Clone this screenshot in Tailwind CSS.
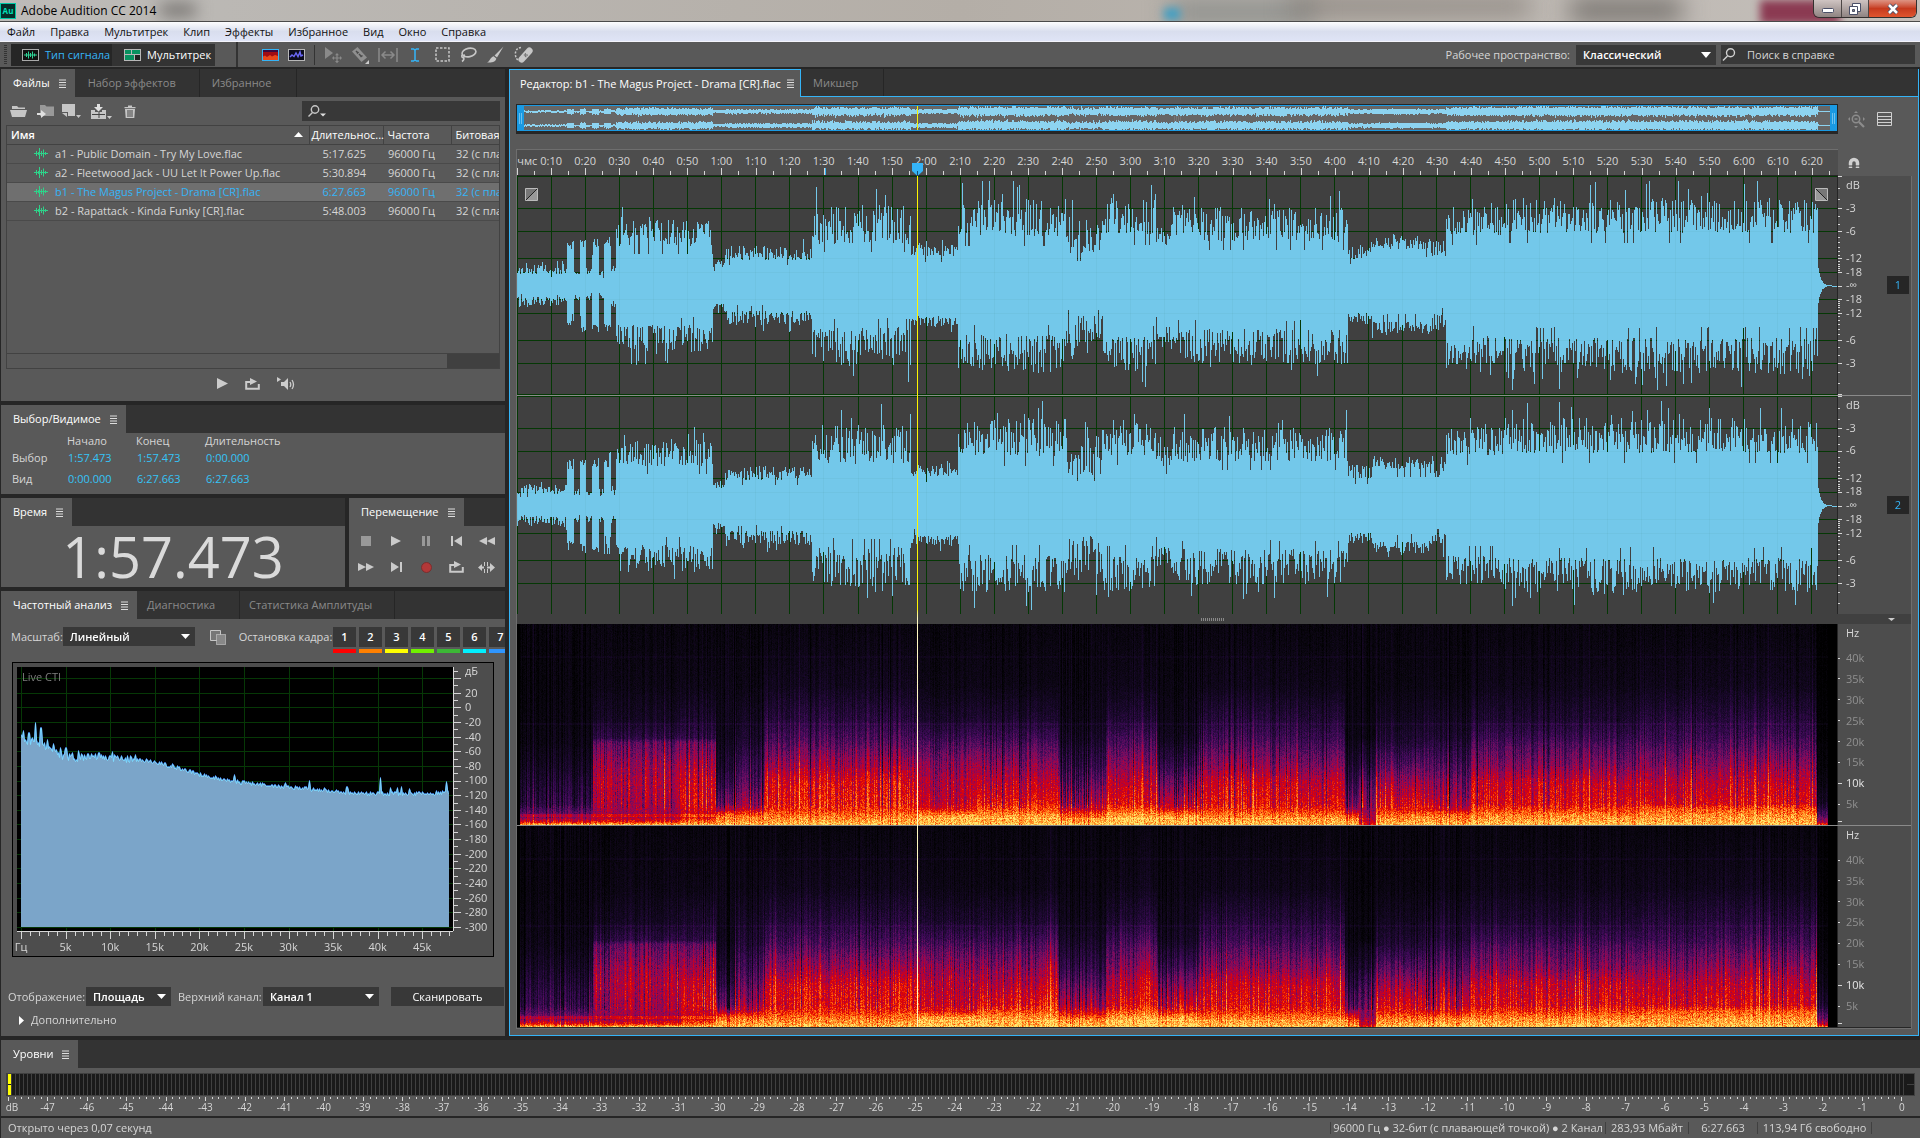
<!DOCTYPE html>
<html lang="ru">
<head>
    <meta charset="UTF-8">
    <meta name="viewport" content="width=device-width, initial-scale=1.0">
    <title>Adobe Audition CC 2014</title>
    <script src="https://cdn.jsdelivr.net/npm/@tailwindcss/browser@4"></script>
</head>
<body class="flex h-screen flex-col overflow-hidden bg-[#262626] font-['Open_Sans','Noto_Sans',sans-serif] text-[11px] leading-4 text-[#d6d6d6]">

    <!-- Window title bar -->
    <header class="relative flex h-[22px] shrink-0 items-start justify-between overflow-hidden border-b border-[#4a4a4a] bg-linear-to-r from-[#bdbbb8] via-[#b4aea7] to-[#c4bfba]">
        <div class="absolute top-1 left-40 h-3 w-9 rounded bg-[#6f6c69] blur-sm"></div>
        <div class="absolute top-0 left-[1170px] h-6 w-36 bg-[#8d8f8c] blur-md"></div>
        <div class="absolute top-2 left-[1164px] h-3 w-4 bg-[#3f9fc4] blur-xs"></div>
        <div class="absolute top-0 left-[1290px] h-3 w-60 bg-[#77706a] blur-md"></div>
        <div class="absolute top-0 left-[1570px] h-5 w-28 bg-[#6d6965] blur-md"></div>
        <div class="absolute top-0 right-20 h-6 w-20 bg-[#8b3a52] blur-xs"></div>
        <div class="relative flex h-full items-center gap-[5px]">
            <svg class="size-4" viewBox="0 0 16 16"><rect x=".5" y=".5" width="15" height="15" fill="#062d29" stroke="#00c8a5"/><text x="8" y="11" font-size="8" font-weight="700" text-anchor="middle" fill="#00e0b8">Au</text></svg>
            <h1 class="text-[12px] text-black">Adobe Audition CC 2014</h1>
        </div>
        <div class="relative mr-[3px] flex h-[18px] overflow-hidden rounded-b-md border border-t-0 border-[#33302f]">
            <button aria-label="Свернуть" class="flex w-[28px] items-center justify-center border-r border-[#4d4746] bg-linear-to-b from-[#cfc4c2] to-[#8f8482]"><svg class="size-3" viewBox="0 0 12 12"><rect x=".5" y="5.500" width="11" height="4" rx="1" fill="#fff" stroke="#4b5068"/></svg></button>
            <button aria-label="Развернуть" class="flex w-[27px] items-center justify-center border-r border-[#4d4746] bg-linear-to-b from-[#cfc4c2] to-[#8f8482]"><svg class="size-3" viewBox="0 0 12 12"><path d="M3.500.5h8v8h-8z" fill="#fff" stroke="#4b5068"/><path d="M.5 3.500h8v8h-8z" fill="#fff" stroke="#4b5068"/><path d="M3.500 6.500h2v2h-2z" fill="#8a8686" stroke="#4b5068"/></svg></button>
            <button aria-label="Закрыть" class="flex w-[47px] items-center justify-center bg-linear-to-b from-[#dd9383] via-[#c63a1e] to-[#e0552f]"><svg class="size-3" viewBox="0 0 12 12"><path d="M2 2l8 8M10 2l-8 8" stroke="#4b5068" stroke-width="4.500"/><path d="M2 2l8 8M10 2l-8 8" stroke="#fff" stroke-width="2.500"/></svg></button>
        </div>
    </header>

    <!-- Menu -->
    <nav class="flex h-5 shrink-0 items-center gap-[15px] border-b border-[#f4f4fb] bg-linear-to-b from-[#fdfdfe] via-[#d9deee] to-[#dfe4f6] pl-[7px] text-[#111]">
        <button>Файл</button><button>Правка</button><button>Мультитрек</button><button>Клип</button><button>Эффекты</button><button>Избранное</button><button>Вид</button><button>Окно</button><button>Справка</button>
    </nav>

    <!-- Toolbar -->
    <div class="mb-[2px] flex h-[25px] shrink-0 items-center bg-[#595959] pr-[5px]">
        <div class="ml-1 h-5 w-[3px] bg-[repeating-linear-gradient(#333_0_1px,transparent_1px_2px)]"></div>
        <button class="ml-1 flex h-[22px] w-[101px] items-center gap-[6px] bg-[#262626] pl-[11px] font-medium whitespace-nowrap text-[#35b4f7]">
            <svg class="h-3 w-[17px] shrink-0" viewBox="0 0 17 12"><rect x=".5" y=".5" width="16" height="11" fill="#111" stroke="#aaa"/><path d="M2 6h13M4.500 4v4M6.500 2.500v7M8.500 4v4M10.500 2.500v7M12.500 4.500v3" stroke="#2ed396"/></svg>
            Тип сигнала
        </button>
        <button class="flex h-[22px] w-[103px] items-center gap-[6px] bg-[#333] pl-3 font-medium whitespace-nowrap text-white">
            <svg class="h-3 w-[17px] shrink-0" viewBox="0 0 17 12"><rect width="17" height="12" fill="#b8b8b8"/><path d="M1 1h6v4H1zM8 1h8v4H8zM1 6h9v5H1z" fill="#07915f"/><path d="M11 6h5v5h-5z" fill="#222"/></svg>
            Мультитрек
        </button>
        <div class="ml-[21px] h-full w-[2px] bg-[#333]"></div>
        <div class="ml-6 flex items-center gap-[9px] text-[#c6c6c6]">
            <button aria-label="Спектр частот"><svg class="h-3 w-[17px]" viewBox="0 0 17 12"><rect x=".5" y=".5" width="16" height="11" fill="#a00c14" stroke="#35b4f7"/><path d="M1 1h15v2H1z" fill="#3a0a40"/><path d="M1 9V7.500l2-1 2 1.500 3-2 2 1.500 3-1.500 3 1V11H1z" fill="#e8481a"/></svg></button>
            <button aria-label="Спектр высоты"><svg class="h-3 w-[17px]" viewBox="0 0 17 12"><rect x=".5" y=".5" width="16" height="11" fill="#0c0c1c" stroke="#b8b8b8"/><path d="M2 8l2-2 2 1.500L8 4l2 3.500L12 3l1 4 2-1" fill="none" stroke="#6a67f5" stroke-width="1.500"/></svg></button>
            <span class="h-5 w-px bg-[#333]"></span>
            <button aria-label="Перемещение" class="text-[#8a8a8a]"><svg class="size-[18px]" viewBox="0 0 18 18" fill="currentColor"><path d="M1 1v12l8-6z"/><path d="M13 7l2 2.300h-1.400v2.100H16V10l2 2-2 2v-1.400h-2.400V15H15l-2 2.300L11 15h1.400v-2.400H10V14l-2-2 2-2v1.400h2.400V9.300H11z"/></svg></button>
            <button aria-label="Лезвие" class="text-[#8f8f8f]"><svg class="size-[18px]" viewBox="0 0 18 18"><path d="M1 5.500L6.500 1l9.500 10.500-5.500 4.500z" fill="currentColor"/><path d="M5 5l1.500 1.500M8 8l2.500 2.500M7.500 6l-1.500 1.500M11.500 9.500L9.500 11" stroke="#4a4a4a" stroke-width="1.500"/><path d="M18 14v4h-4z" fill="#ccc"/></svg></button>
            <button aria-label="Скольжение" class="text-[#8a8a8a]"><svg class="h-4 w-5" viewBox="0 0 20 16" fill="none" stroke="currentColor" stroke-width="1.500"><path d="M1 1v14M19 1v14M4 8h12M7.500 4.500L4 8l3.500 3.500M12.500 4.500L16 8l-3.500 3.500"/></svg></button>
            <button aria-label="Выделение времени" class="mr-1 ml-px px-[3px] text-[#35b4f7]"><svg class="h-[14px] w-2" viewBox="0 0 8 14" fill="none" stroke="currentColor" stroke-width="1.500"><path d="M0 1h2.500L4 2l1.500-1H8M0 13h2.500L4 12l1.500 1H8M4 2v10"/></svg></button>
            <button aria-label="Прямоугольная область"><svg class="size-[15px]" viewBox="0 0 15 15"><path d="M1 1h13v13H1z" fill="none" stroke="currentColor" stroke-width="1.500" stroke-dasharray="2.500 1.500"/></svg></button>
            <button aria-label="Лассо"><svg class="h-4 w-[18px]" viewBox="0 0 18 16" fill="none" stroke="currentColor" stroke-width="1.600"><ellipse cx="10" cy="5.500" rx="7" ry="4.200" transform="rotate(-12 10 5.500)"/><path d="M3.500 7.500c-1.500 1.500-.5 3.300 1 2.700s.8-2 .2-2.600M4.500 10.500c.8 1.500 0 3-1.500 4"/></svg></button>
            <button aria-label="Кисть"><svg class="size-[18px]" viewBox="0 0 18 18" fill="currentColor"><path d="M17.500.5L11 11.500 8.500 9.500zM7.700 10.300l2.600 2.200c-.5 3-3.500 4.500-9.300 4 3-1 3.200-5.300 6.700-6.200z"/></svg></button>
            <button aria-label="Точечное восстановление" class="ml-px"><svg class="h-[18px] w-5" viewBox="0 0 20 18"><path d="M7 1.500C2 2 1 6.500 1.500 9.500s2 4.500 3.500 5.500" fill="none" stroke="currentColor" stroke-width="1.500" stroke-dasharray="2 1.500"/><rect x="2.500" y="5.800" width="18" height="6.500" rx="3.200" transform="rotate(-48 11.500 9)" fill="currentColor"/><path d="M9.500 9l2-2 2.500 2-2 2.500z" fill="#6a6a6a"/><path d="M10.500 9h.8M12 8h.8M12 10h.8" stroke="#ddd"/></svg></button>
        </div>
        <label for="workspace" class="ml-auto">Рабочее пространство:</label>
        <div class="relative ml-[6px]">
            <select id="workspace" class="h-5 w-[140px] appearance-none bg-[#383838] pl-[7px] font-semibold text-white"><option>Классический</option></select>
            <svg class="pointer-events-none absolute top-[7px] right-[5px] h-[6px] w-[10px]" viewBox="0 0 10 6"><path d="M0 0h10L5 6z" fill="#fff"/></svg>
        </div>
        <div class="ml-[5px] flex h-[19px] w-[194px] items-center gap-[11px] bg-[#383838] pl-px">
            <svg class="h-[13px] w-[14px]" viewBox="0 0 14 13" fill="none" stroke="#d0d0d0" stroke-width="1.400"><circle cx="8.500" cy="4.800" r="4"/><path d="M5.500 8L1 12.500"/></svg>
            <input aria-label="Поиск в справке" placeholder="Поиск в справке" class="w-40 bg-transparent outline-none placeholder:text-[#d6d6d6]">
        </div>
    </div>

    <!-- Work area -->
    <main class="flex min-h-0 flex-1 gap-1 pr-px pl-px">
        <div class="flex w-[504px] shrink-0 flex-col gap-1">

            <!-- Files -->
            <section class="flex h-[332px] flex-col bg-[#595959]">
                <div class="flex h-7 shrink-0 bg-[#333] text-[#8a8a8a]">
                    <button class="flex items-center gap-[9px] bg-[#595959] pr-[9px] pl-3 text-white">Файлы <svg class="h-[9px] w-[7px]" viewBox="0 0 7 9"><path d="M0 1h7M0 3.500h7M0 6h7M0 8.500h7" stroke="#ddd"/></svg></button>
                    <button class="w-[125px] border-r border-[#262626] pl-[13px] text-left">Набор эффектов</button>
                    <button class="w-[97px] border-r border-[#262626] pl-3 text-left">Избранное</button>
                </div>
                <div class="flex h-7 shrink-0 items-center gap-2 pr-[5px] pl-[9px] text-[#c6c6c6]">
                    <button aria-label="Открыть файл"><svg class="h-3 w-[17px]" viewBox="0 0 17 12" fill="currentColor"><path d="M2 4V1h5l1.500 1.500H15V4zM0 5h17l-2 7H2z"/></svg></button>
                    <button aria-label="Импорт файла" class="ml-[2px]"><svg class="h-[14px] w-[17px]" viewBox="0 0 17 14"><path d="M3 1h5l1.500 1.500H17V12H3z" fill="#999"/><path d="M0 9h4V6l5 4-5 4v-3H0z" fill="#e0e0e0"/></svg></button>
                    <button aria-label="Новый файл"><svg class="h-[14px] w-[19px]" viewBox="0 0 19 14" fill="currentColor"><path d="M0 0h13v12H6V8H0zM0 9h5v4zM14 11h5l-2.500 3z"/></svg></button>
                    <button aria-label="Вставить в мультитрек" class="ml-[2px]"><svg class="h-[15px] w-[21px]" viewBox="0 0 21 15"><path d="M0 6h4v2h7V6h4v9H0z" fill="#c6c6c6"/><path d="M6 0h3v3h3L7.500 7.500 3 3h3z" fill="#e0e0e0"/><path d="M1 10.500h13M8 8v6" stroke="#444"/><path d="M16 12h5l-2.500 3z" fill="#ccc"/></svg></button>
                    <button aria-label="Удалить" class="ml-1"><svg class="h-[13px] w-3" viewBox="0 0 12 13"><path d="M1 4h10l-.7 9H1.700zM.5 2h11v1.300H.5zM4 .5h4V2H4z" fill="currentColor"/><path d="M4 5v7M6 5v7M8 5v7" stroke="#444"/></svg></button>
                    <div class="ml-auto flex h-5 w-[198px] items-center bg-[#383838] pl-[6px]">
                        <svg class="h-3 w-[18px]" viewBox="0 0 18 12" fill="none" stroke="#c6c6c6" stroke-width="1.400"><circle cx="7" cy="4.500" r="3.700"/><path d="M4.500 7.500L.5 11.500"/><path d="M12 8.500h6l-3 3z" fill="#ddd" stroke="none"/></svg>
                        <input aria-label="Поиск файлов" class="w-40 bg-transparent outline-none">
                    </div>
                </div>
                <div class="mx-[5px] flex flex-1 flex-col overflow-hidden border border-[#424242]">
                    <table class="w-full table-fixed border-collapse whitespace-nowrap">
                        <thead>
                            <tr class="h-[18px] border-b border-[#424242] text-left leading-[17px] text-white">
                                <th class="w-[302px] pl-1 font-semibold"><span class="flex items-center justify-between pr-[6px]">Имя <svg class="h-[5px] w-[9px]" viewBox="0 0 9 5"><path d="M4.500 0L9 5H0z" fill="#fff"/></svg></span></th>
                                <th class="w-[74px] border-l border-[#424242] pl-[2px] font-normal">Длительнос...</th>
                                <th class="w-[68px] border-l border-[#424242] pl-1 font-medium">Частота</th>
                                <th class="overflow-hidden border-l border-[#424242] pl-1 font-medium">Битовая</th>
                            </tr>
                        </thead>
                        <tbody id="files"></tbody>
                    </table>
                    <div class="mt-auto flex h-[15px] border-t border-[#424242] bg-[#404040]"><div class="w-[440px] bg-[#595959]"></div></div>
                </div>
                <div class="flex h-[32px] shrink-0 items-center justify-center gap-[17px] pb-[3px] pl-[6px]">
                    <button aria-label="Воспроизвести"><svg class="h-[11px] w-[11px]" viewBox="0 0 11 11"><path d="M0 0l11 5.500L0 11z" fill="#ccc"/></svg></button>
                    <button aria-label="Цикл"><svg class="h-3 w-[15px]" viewBox="0 0 15 12"><path d="M6 4H1.200v6.800h12.600V6" fill="none" stroke="#ccc" stroke-width="2"/><path d="M5 0l7 3.500-7 3.500z" fill="#ccc"/></svg></button>
                    <button aria-label="Автовоспроизведение"><svg class="h-[14px] w-[18px]" viewBox="0 0 18 14"><path d="M0 0l4 2.500L0 5z" fill="#ccc"/><path d="M4 5h3l4-4v12l-4-4H4z" fill="#ccc"/><path d="M13 5q1.500 2.500 0 5M15 3q3 4.500 0 9" fill="none" stroke="#ccc" stroke-width="1.300"/></svg></button>
                </div>
            </section>

            <!-- Selection / View -->
            <section class="flex h-[89px] flex-col bg-[#595959]">
                <div class="flex h-7 bg-[#333]">
                    <button class="flex items-center gap-[9px] bg-[#595959] pr-[9px] pl-3 text-white">Выбор/Видимое <svg class="h-[9px] w-[7px]" viewBox="0 0 7 9"><path d="M0 1h7M0 3.500h7M0 6h7M0 8.500h7" stroke="#ddd"/></svg></button>
                </div>
                <table class="w-[300px] table-fixed text-left">
                    <thead><tr><th class="w-[66px]"></th><th class="w-[69px] font-normal">Начало</th><th class="w-[69px] font-normal">Конец</th><th class="font-normal">Длительность</th></tr></thead>
                    <tbody class="text-[#35c4f7]">
                        <tr class="h-[18px]"><th class="pl-[11px] font-normal text-[#d6d6d6]">Выбор</th><td class="pl-px">1:57.473</td><td class="pl-px">1:57.473</td><td class="pl-px">0:00.000</td></tr>
                        <tr class="h-6"><th class="pl-[11px] font-normal text-[#d6d6d6]">Вид</th><td class="pl-px">0:00.000</td><td class="pl-px">6:27.663</td><td class="pl-px">6:27.663</td></tr>
                    </tbody>
                </table>
            </section>

            <div class="flex h-[89px] gap-1">
                <!-- Time -->
                <section class="flex w-[344px] flex-col bg-[#595959]">
                    <div class="flex h-7 shrink-0 bg-[#333]">
                        <button class="flex items-center gap-[9px] bg-[#595959] pr-[9px] pl-3 text-white">Время <svg class="h-[9px] w-[7px]" viewBox="0 0 7 9"><path d="M0 1h7M0 3.500h7M0 6h7M0 8.500h7" stroke="#ddd"/></svg></button>
                    </div>
                    <output class="text-center text-[56px] leading-[61px] text-[#dadada]">1:57.473</output>
                </section>
                <!-- Transport -->
                <section class="flex flex-1 flex-col overflow-hidden bg-[#595959]">
                    <div class="flex h-7 bg-[#333]">
                        <button class="flex items-center gap-[9px] bg-[#595959] pr-[9px] pl-3 text-white">Перемещение <svg class="h-[9px] w-[7px]" viewBox="0 0 7 9"><path d="M0 1h7M0 3.500h7M0 6h7M0 8.500h7" stroke="#ddd"/></svg></button>
                    </div>
                    <div class="grid grid-cols-5 gap-y-[10px] pt-[7px] pr-[3px] pl-[2px] text-[#cacaca]">
                        <button aria-label="Стоп" class="flex h-4 items-center justify-center text-[#999]"><svg class="size-[10px]" viewBox="0 0 10 10" fill="currentColor"><path d="M0 0h10v10H0z"/></svg></button>
                        <button aria-label="Воспроизвести" class="flex h-4 items-center justify-center"><svg class="size-[10px]" viewBox="0 0 10 10" fill="currentColor"><path d="M0 0l10 5-10 5z"/></svg></button>
                        <button aria-label="Пауза" class="flex h-4 items-center justify-center text-[#999]"><svg class="h-[10px] w-2" viewBox="0 0 8 10" fill="currentColor"><path d="M0 0h3v10H0zM5 0h3v10H5z"/></svg></button>
                        <button aria-label="К началу" class="flex h-4 items-center justify-center"><svg class="h-[10px] w-[11px]" viewBox="0 0 11 10" fill="currentColor"><path d="M0 0h2v10H0zM11 0v10L3 5z"/></svg></button>
                        <button aria-label="Назад" class="flex h-4 items-center justify-center"><svg class="h-2 w-4" viewBox="0 0 16 8" fill="currentColor"><path d="M8 0v8L0 4zM16 0v8L8 4z"/></svg></button>
                        <button aria-label="Вперёд" class="flex h-4 items-center justify-center"><svg class="h-2 w-4" viewBox="0 0 16 8" fill="currentColor"><path d="M0 0l8 4-8 4zM8 0l8 4-8 4z"/></svg></button>
                        <button aria-label="К концу" class="flex h-4 items-center justify-center"><svg class="h-[10px] w-[11px]" viewBox="0 0 11 10" fill="currentColor"><path d="M9 0h2v10H9zM0 0l8 5-8 5z"/></svg></button>
                        <button aria-label="Запись" class="flex h-4 items-center justify-center"><svg class="size-[11px]" viewBox="0 0 11 11"><circle cx="5.500" cy="5.500" r="5" fill="#b23838" stroke="#7a2f2f"/></svg></button>
                        <button aria-label="Цикл" class="flex h-4 items-center justify-center"><svg class="h-3 w-[15px]" viewBox="0 0 15 12"><path d="M6 4H1.200v6.800h12.600V6" fill="none" stroke="currentColor" stroke-width="2"/><path d="M5 0l7 3.500-7 3.500z" fill="currentColor"/></svg></button>
                        <button aria-label="Пропустить выделение" class="flex h-4 items-center justify-center"><svg class="h-[11px] w-[17px]" viewBox="0 0 17 11" fill="currentColor"><path d="M0 5.500L4 2v2.500h2v2H4V9zM17 5.500L12 1v3.500H9v2h3V10z"/><path d="M6 0h1v4H6zM6 7h1v4H6zM9 0h1v4H9zM9 7h1v4H9z"/></svg></button>
                    </div>
                </section>
            </div>

            <!-- Frequency analysis -->
            <section class="flex flex-1 flex-col overflow-hidden bg-[#595959]">
                <div class="flex h-7 shrink-0 bg-[#333] text-[#8a8a8a]">
                    <button class="flex items-center gap-[9px] bg-[#595959] pr-[9px] pl-3 text-white">Частотный анализ <svg class="h-[9px] w-[7px]" viewBox="0 0 7 9"><path d="M0 1h7M0 3.500h7M0 6h7M0 8.500h7" stroke="#ddd"/></svg></button>
                    <button class="w-[103px] border-r border-[#262626] pl-[10px] text-left">Диагностика</button>
                    <button class="w-[155px] border-r border-[#262626] pl-[9px] text-left">Статистика Амплитуды</button>
                </div>
                <div class="mt-2 flex h-[27px] shrink-0 items-start overflow-hidden whitespace-nowrap">
                    <label for="scale" class="w-[62px] pt-[2px] pl-[10px]">Масштаб:</label>
                    <div class="relative shrink-0">
                        <select id="scale" class="h-[19px] w-[132px] appearance-none bg-[#383838] pl-[7px] font-semibold text-white"><option>Линейный</option></select>
                        <svg class="pointer-events-none absolute top-[7px] right-[5px] h-[5px] w-[9px]" viewBox="0 0 9 5"><path d="M0 0h9L4.500 5z" fill="#fff"/></svg>
                    </div>
                    <button aria-label="Копировать" class="ml-[15px] shrink-0 pt-[2px]"><svg class="size-4" viewBox="0 0 16 16"><path d="M.5 1.500h10v10H.5z" fill="#777" stroke="#c6c6c6"/><path d="M6.500 5.500h9v10h-9z" fill="#888" stroke="#ddd" stroke-dasharray="1 1"/></svg></button>
                    <span class="ml-[13px] w-[94px] shrink-0 pt-[2px]">Остановка кадра:</span>
                    <div id="holds" class="flex gap-[3px]"></div>
                </div>
                <div class="mx-[11px] mt-2 flex h-[295px] w-[482px] shrink-0 flex-col border border-black bg-[#4d4d4d] p-1">
                    <div class="flex h-[264px] shrink-0">
                        <div class="relative w-[436px]">
                            <canvas id="freq" class="block h-full w-full"></canvas>
                            <span class="absolute top-[2px] left-[5px] text-[#7d7d7d]">Live CTI</span>
                        </div>
                        <canvas id="freq-ticks" class="block h-full w-2"></canvas>
                        <div id="freq-db" class="flex flex-col pl-1"></div>
                    </div>
                    <canvas id="freq-xticks" class="block h-2 w-[436px] shrink-0"></canvas>
                    <div id="freq-x" class="ml-1 flex h-4 w-[428px] items-end"></div>
                </div>
                <div class="mt-[30px] flex shrink-0 items-center whitespace-nowrap">
                    <label for="display" class="w-[85px] pl-[7px]">Отображение:</label>
                    <div class="relative">
                        <select id="display" class="h-[19px] w-[85px] appearance-none bg-[#383838] pl-[7px] font-semibold text-white"><option>Площадь</option></select>
                        <svg class="pointer-events-none absolute top-[7px] right-[5px] h-[5px] w-[9px]" viewBox="0 0 9 5"><path d="M0 0h9L4.500 5z" fill="#fff"/></svg>
                    </div>
                    <label for="channel" class="ml-[7px] w-[85px]">Верхний канал:</label>
                    <div class="relative">
                        <select id="channel" class="h-[19px] w-[116px] appearance-none bg-[#383838] pl-[7px] font-semibold text-white"><option>Канал 1</option></select>
                        <svg class="pointer-events-none absolute top-[7px] right-[5px] h-[5px] w-[9px]" viewBox="0 0 9 5"><path d="M0 0h9L4.500 5z" fill="#fff"/></svg>
                    </div>
                    <button class="ml-3 h-[19px] w-[113px] bg-[#383838] font-medium text-white">Сканировать</button>
                </div>
                <button class="mt-[6px] ml-[18px] flex items-center gap-[7px] self-start"><svg class="h-[9px] w-[5px]" viewBox="0 0 5 9"><path d="M0 0l5 4.500L0 9z" fill="#fff"/></svg>Дополнительно</button>
            </section>
        </div>

        <!-- Editor -->
        <section class="flex min-w-0 flex-1 flex-col border border-t-0 border-[#35b4f7] bg-[#595959]">
            <div class="-ml-px flex h-7 shrink-0 bg-[#333] text-[#8a8a8a]">
                <button class="flex w-[292px] items-center justify-between border border-b-0 border-[#35b4f7] bg-[#595959] pr-[6px] pl-[10px] whitespace-nowrap text-white">Редактор: b1 - The Magus Project - Drama [CR].flac <svg class="h-[9px] w-[7px] shrink-0" viewBox="0 0 7 9"><path d="M0 1h7M0 3.500h7M0 6h7M0 8.500h7" stroke="#ddd"/></svg></button>
                <div class="flex flex-1 border-b border-[#35b4f7]">
                    <button class="w-[83px] border-r border-[#262626] pl-3 text-left">Микшер</button>
                </div>
            </div>
            <div class="mt-[7px] flex h-[30px] shrink-0 items-center pl-[6px]">
                <div class="relative h-[30px] flex-1 border border-[#262626] bg-[#262626] pb-[2px]">
                    <canvas id="overview" class="block h-full w-full"></canvas>
                </div>
                <div class="flex w-[80px] items-center gap-3 pl-[10px]">
                    <button aria-label="Масштаб" class="text-[#8c8c8c]"><svg class="size-[17px]" viewBox="0 0 17 17" fill="none" stroke="currentColor" stroke-width="1.500"><circle cx="8" cy="8" r="3.700"/><path d="M11 11l5 5" stroke-width="2.200"/><path d="M6.500 8h3"/><path d="M8 0l2 2H6zM0 8l2-2v4zM8 17l2-2H6zM17 8l-2-2v4z" fill="currentColor" stroke="none"/></svg></button>
                    <button aria-label="Список" class="text-[#d0d0d0]"><svg class="h-[14px] w-[15px]" viewBox="0 0 15 14" fill="none" stroke="currentColor"><path d="M.5.5h14v13H.5zM1 4.500h13M1 7.500h13M1 10.500h13"/></svg></button>
                </div>
            </div>
            <div class="mt-[15px] flex h-[27px] shrink-0 pl-[6px]">
                <div class="flex flex-1 flex-col overflow-hidden border-t border-l border-[#6e6e6e] bg-[#4d4d4d]">
                    <div id="timeline" class="flex h-[18px] items-end leading-[14px] whitespace-nowrap"></div>
                    <canvas id="time-ticks" class="block h-2 w-full"></canvas>
                </div>
                <div class="flex w-[80px] items-center pl-[10px]">
                    <button aria-label="Привязка"><svg class="size-3" viewBox="0 0 12 12"><path d="M2.500 11V6a3.500 3.500 0 017 0v5" fill="none" stroke="#d0d0d0" stroke-width="3.500"/><path d="M0 9h5M7 9h5" stroke="#444"/></svg></button>
                </div>
            </div>
            <div class="mr-[6px] mb-[6px] ml-[6px] flex min-h-0 flex-1 flex-col border-r border-b border-l border-[#6e6e6e] bg-[#262626] pb-px">
                <div class="relative flex min-h-0 flex-1 flex-col">
                    <div id="waves" class="flex min-h-0 flex-[439] flex-col"></div>
                    <div class="flex h-[10px] shrink-0 items-center bg-[#404040]">
                        <div class="flex-1 pl-5"><div class="mx-auto h-[3px] w-6 bg-[repeating-linear-gradient(90deg,#888_0_1px,transparent_1px_2px)]"></div></div>
                        <svg class="mr-4 h-[3px] w-[7px]" viewBox="0 0 7 3"><path d="M0 0h7L3.500 3z" fill="#ccc"/></svg>
                    </div>
                    <div id="spectra" class="flex min-h-0 flex-[403] flex-col"></div>
                    <div class="pointer-events-none absolute inset-y-0 right-[74px] left-0">
                        <div id="playhead" class="absolute inset-y-0 w-px bg-linear-to-b from-[#fff500] from-51% to-[#fff8c0] to-52%">
                            <svg class="absolute -top-[13px] -left-[5px] h-[13px] w-[11px]" viewBox="0 0 11 13"><path d="M0 0h11v8l-5.500 5L0 8z" fill="#35b4f7"/><path d="M5.500 8v5" stroke="#164e72"/></svg>
                        </div>
                        <svg class="absolute top-3 left-2 size-[13px]" viewBox="0 0 13 13"><path d="M.5.5h12v12H.5z" fill="#777" stroke="#bbb"/><path d="M1 12L12 1v11z" fill="#999"/><path d="M1 12L12 1" stroke="#222"/></svg>
                        <svg class="absolute top-3 right-[9px] size-[13px]" viewBox="0 0 13 13"><path d="M.5.5h12v12H.5z" fill="#777" stroke="#bbb"/><path d="M1 12V1l11 11z" fill="#999"/><path d="M1 1l11 11" stroke="#222"/></svg>
                    </div>
                </div>
            </div>
        </section>
    </main>

    <!-- Levels -->
    <section class="mt-1 ml-px flex h-[76px] shrink-0 flex-col bg-[#595959]">
        <div class="flex h-7 bg-[#333]">
            <button class="flex items-center gap-[9px] bg-[#595959] pr-[9px] pl-3 text-white">Уровни <svg class="h-[9px] w-[7px]" viewBox="0 0 7 9"><path d="M0 1h7M0 3.500h7M0 6h7M0 8.500h7" stroke="#ddd"/></svg></button>
        </div>
        <canvas id="meter" class="mx-[5px] mt-[5px] block h-[23px]"></canvas>
        <canvas id="meter-ticks" class="mt-px mr-[18px] ml-[7px] block h-[5px]"></canvas>
        <div id="meter-db" class="mr-[18px] ml-[7px] flex h-[10px] items-center text-[10px]"></div>
    </section>

    <!-- Status bar -->
    <footer class="mt-[2px] ml-px flex h-5 shrink-0 items-center bg-[#595959] pl-[7px]">
        <span>Открыто через 0,07 секунд</span>
        <div class="mr-12 ml-auto flex h-3 items-center text-center whitespace-nowrap">
            <span class="h-3 w-[275px] border-l border-[#404040] leading-3">96000 Гц ● 32-бит (с плавающей точкой) ● 2 Канал</span>
            <span class="h-3 w-[83px] border-l border-[#404040] leading-3">283,93 Мбайт</span>
            <span class="h-3 w-[69px] border-l border-[#404040] leading-3">6:27.663</span>
            <span class="h-3 w-[115px] border-x border-[#404040] leading-3">113,94 Гб свободно</span>
        </div>
    </footer>

    <script>
        const LENGTH = 387.663, CURSOR = 117.473;

        const files = [
            ['a1 - Public Domain - Try My Love.flac', '5:17.625'],
            ['a2 - Fleetwood Jack - UU Let It Power Up.flac', '5:30.894'],
            ['b1 - The Magus Project - Drama [CR].flac', '6:27.663'],
            ['b2 - Rapattack - Kinda Funky [CR].flac', '5:48.003'],
        ];
        document.getElementById('files').innerHTML = files.map(([name, len], i) => `
            <tr class="h-[19px] border-b border-[#4a4a4a] ${i === 2 ? 'bg-[#6f6f6f] text-[#35b4f7]' : ''}">
                <td class="pl-[27px]"><span class="flex items-center gap-[7px]"><svg class="h-[11px] w-[14px]" viewBox="0 0 14 11"><path d="M0 5.500h14M2.500 3v5M4.500 4v3M5.500 0v11M7.500 3v5M9.500 1.500v8M11.500 4v3" stroke="#2ed38a"/></svg>${name}</span></td>
                <td class="pr-[17px] text-right">${len}</td>
                <td class="pl-[5px]">96000 Гц</td>
                <td class="overflow-hidden pl-[5px]">32 (с плавающей точкой)</td>
            </tr>`).join('');

        const holdColors = ['#ff0000', '#ff8000', '#ffff00', '#70f000', '#3cb836', '#00f0ff', '#2f96ff'];
        document.getElementById('holds').innerHTML = holdColors.map((c, i) => `
            <button class="w-[23px] shrink-0 text-white"><span class="mb-[2px] block h-5 bg-[#383838] leading-5 font-semibold">${i + 1}</span><span class="block h-1" style="background:${c}"></span></button>`).join('');

        // Places labels along an axis: growing spacers between zero-size items
        function axis(el, marks, total, vertical) {
            let prev = 0, html = '';
            for (const [pos, text, cls] of marks) {
                html += `<i style="flex:${pos - prev} 0 0px"></i>`;
                html += vertical
                    ? `<span class="flex h-0 items-center ${cls || ''}">${text}</span>`
                    : `<span class="flex w-0 justify-center ${cls || ''}">${text}</span>`;
                prev = pos;
            }
            el.innerHTML = html + `<i style="flex:${total - prev} 0 0px"></i>`;
        }

        function random(seed) {
            return () => {
                seed = (seed * 1664525 + 1013904223) >>> 0;
                return seed / 4294967296;
            };
        }

        function prepare(canvas) {
            const w = canvas.width = canvas.clientWidth;
            const h = canvas.height = canvas.clientHeight;
            return [canvas.getContext('2d'), w, h];
        }

        // [end second, low level, high level]
        const levels = [
            [14.5, .1, .2], [16.5, .32, .42], [18.3, .09, .14], [20.2, .35, .45], [22, .09, .14], [24, .35, .45],
            [25.5, .09, .16], [27.5, .35, .45], [29, .12, .2], [57.5, .36, .62], [61, .16, .24], [86.5, .23, .37],
            [115.5, .38, .76], [129.5, .27, .38], [161, .45, .82], [172, .28, .66], [187.5, .46, .8], [192, .36, .6],
            [244, .4, .74], [251, .24, .38], [268, .33, .44], [272.6, .26, .42], [290, .46, .74], [381.9, .48, .82],
        ];
        function peak(t, rnd) {
            if (t > 381.9) return t > 386 ? 0 : .2 * Math.exp((381.9 - t) / .8);
            const [, lo, hi] = levels.find(l => t <= l[0]);
            const r = rnd();
            let v = lo + (hi - lo) * Math.pow(r, 1.2);
            if (r > .96) v += (hi - lo) * rnd() * .45;
            if (rnd() > .96) v = lo * .8;
            return Math.min(.95, v);
        }

        function drawWave(canvas, channel) {
            const [g, w, h] = prepare(canvas);
            const mid = h / 2;
            g.fillStyle = '#404040';
            g.fillRect(0, 0, w, h);
            const lines = () => {
                for (let t = 0; t < LENGTH; t += 10) g.fillRect(Math.round(t / LENGTH * w), 0, 1, h);
                for (const db of [0, 3, 6, 12, 18]) {
                    const a = mid * Math.pow(10, -db / 20);
                    g.fillRect(0, Math.max(0, Math.round(mid - a)), w, 1);
                    g.fillRect(0, Math.min(h - 1, Math.round(mid + a)), w, 1);
                }
            };
            g.fillStyle = '#063806';
            lines();
            const rnd = random(17 + channel);
            g.fillStyle = '#73c8ea';
            for (let x = 0; x < w; x++) {
                const t = x / w * LENGTH;
                const up = peak(t, rnd) * mid, down = peak(t, rnd) * mid;
                g.fillRect(x, Math.round(mid - up), 1, Math.max(1, Math.round(up + down)));
            }
            g.globalAlpha = .03;
            g.fillStyle = '#063806';
            lines();
            g.globalAlpha = 1;
        }

        function drawOverview() {
            const [g, w, h] = prepare(document.getElementById('overview'));
            g.fillStyle = '#666';
            g.fillRect(0, 0, w, h);
            g.fillStyle = '#8dd3f0';
            for (const [i, mid] of [6.5, 20.5].entries()) {
                const rnd = random(5 + i);
                for (let x = 6; x < w - 1; x++) {
                    const t = x / w * LENGTH;
                    const up = peak(t, rnd) * 6.8, down = peak(t, rnd) * 6.8;
                    g.fillRect(x, Math.round(mid - up), 1, Math.max(1, Math.round(up + down)));
                }
            }
            g.fillStyle = '#1a9ae3';
            g.fillRect(0, 0, w, 1);
            g.fillRect(0, h - 1, w, 1);
            g.fillRect(0, 0, 7, h);
            g.fillRect(w - 7, 0, 7, h);
            g.fillStyle = '#6cc2f0';
            for (const x of [2, 4, w - 5, w - 3]) g.fillRect(x, 8, 1, 11);
            g.fillStyle = '#777';
            for (let x = 0; x < 7; x += 2) g.fillRect(Math.round(w / 2) - 3 + x, 11, 1, 6);
            g.fillStyle = '#f5f000';
            g.fillRect(Math.round(CURSOR / LENGTH * w), 1, 1, h - 2);
        }

        const palette = [
            [0, 0, 0, 0], [.04, 8, 5, 13], [.12, 24, 8, 42], [.24, 62, 10, 88], [.34, 112, 14, 98], [.44, 160, 4, 76],
            [.52, 200, 0, 32], [.6, 222, 6, 4], [.68, 250, 60, 0], [.78, 255, 122, 26], [.88, 255, 172, 56], [1, 255, 232, 110],
        ];
        const colors = Array.from({ length: 256 }, (_, i) => {
            const v = i / 255;
            const k = Math.max(1, palette.findIndex(p => p[0] >= v));
            const a = palette[k - 1], b = palette[k], f = (v - a[0]) / (b[0] - a[0]);
            return [1, 2, 3].map(n => a[n] + (b[n] - a[n]) * f);
        });

        // Loudness of each passage at the frequencies below, kHz
        const bands = [0, .6, 2, 3.6, 5, 10, 14, 19.6, 20.6, 25, 33, 48];
        const passages = [
            [.6, [0, 0, 0, 0, 0, 0, 0, 0, 0, 0, 0, 0]],
            [22.3, [.88, .6, .34, .26, .19, .14, .1, .06, .06, .05, .04, .04]],
            [48, [.9, .62, .42, .44, .45, .47, .42, .3, .18, .1, .06, .04]],
            [58.3, [.9, .74, .54, .54, .56, .52, .43, .3, .18, .12, .06, .04]],
            [64, [.92, .84, .76, .46, .3, .17, .12, .08, .07, .07, .06, .04]],
            [72.6, [.92, .84, .76, .52, .42, .29, .22, .14, .13, .1, .06, .04]],
            [118, [.92, .86, .77, .65, .6, .56, .42, .26, .24, .16, .08, .04]],
            [135, [.95, .92, .86, .6, .52, .47, .4, .25, .22, .12, .06, .04]],
            [159, [.94, .9, .84, .7, .6, .49, .39, .25, .22, .13, .06, .04]],
            [172.7, [.92, .86, .74, .54, .42, .27, .18, .11, .1, .07, .05, .04]],
            [187.9, [.94, .93, .86, .7, .58, .49, .38, .25, .23, .14, .07, .04]],
            [200, [.92, .91, .84, .6, .48, .32, .2, .1, .09, .07, .05, .04]],
            [243, [.92, .88, .78, .64, .57, .51, .37, .24, .22, .15, .07, .04]],
            [247, [.88, .82, .66, .4, .28, .17, .11, .06, .05, .05, .04, .04]],
            [252, [.62, .52, .44, .4, .36, .26, .15, .08, .05, .05, .04, .04]],
            [266, [.92, .86, .77, .62, .56, .42, .28, .14, .13, .09, .05, .04]],
            [280, [.92, .86, .76, .56, .47, .35, .25, .15, .13, .1, .05, .04]],
            [330, [.94, .89, .8, .67, .57, .51, .36, .24, .21, .13, .07, .04]],
            [381.6, [.93, .89, .83, .72, .57, .5, .39, .25, .23, .16, .08, .04]],
            [384.8, [.7, .46, .3, .2, .12, .06, .04, .03, .02, .02, .01, .01]],
            [400, [0, 0, 0, 0, 0, 0, 0, 0, 0, 0, 0, 0]],
        ];
        function drawSpectrum(canvas, channel) {
            const [g, w, h] = prepare(canvas);
            if (!w || !h) return;
            const img = g.createImageData(w, h);
            const rnd = random(101 + channel);
            for (let x = 0; x < w; x++) {
                const t = x / w * LENGTH;
                const p = passages.find(s => t <= s[0])[1];
                const quiet = p[0] === 0;
                const sparse = p[5] < .36;
                // Louder and weaker columns: drum hits and the gaps between them
                let col = (rnd() + rnd() - 1) * (sparse ? 1.6 : .9);
                const hit = rnd();
                if (hit > .92) col += .8;
                if (hit < .07) col -= .7;
                let band = 1;
                for (let y = h - 1; y >= 0; y--) {
                    const f = (h - 1 - y) / h * 48;
                    while (f > bands[band] && band < bands.length - 1) band++;
                    const k = (f - bands[band - 1]) / (bands[band] - bands[band - 1]);
                    let v = p[band - 1] + (p[band] - p[band - 1]) * Math.min(1, k);
                    if (!quiet) {
                        const base = v;
                        const spread = f < 4 ? .09 : .18;
                        v += col * spread * Math.min(1, .06 + base * 2.4);
                        v += (rnd() + rnd() - 1) * (.02 + base * .22);
                        if (Math.abs(f - 24) < .35) v += .03;
                        if (Math.abs(f - 40) < .15) v += .025;
                        if (t < 58 && f > 1.8 && f < 2.5) v += .14;
                        if (t > 117 && t < 250 && f > 1.2 && f < 1.6) v += .07;
                    }
                    const c = colors[Math.max(0, Math.min(255, Math.round(v * 255)))];
                    const o = (y * w + x) * 4;
                    img.data[o] = c[0];
                    img.data[o + 1] = c[1];
                    img.data[o + 2] = c[2];
                    img.data[o + 3] = 255;
                }
            }
            g.putImageData(img, 0, 0);
        }

        function drawDbTicks(canvas) {
            const [g, , h] = prepare(canvas);
            const mid = h / 2;
            g.fillStyle = '#d6d6d6';
            g.fillRect(0, Math.round(mid), 4, 1);
            for (let db = 0; db <= 18; db++) {
                const a = mid * Math.pow(10, -db / 20);
                const len = [0, 3, 6, 12, 18].includes(db) ? 4 : 2;
                g.fillRect(0, Math.round(mid - a), len, 1);
                g.fillRect(0, Math.min(h - 1, Math.round(mid + a)), len, 1);
            }
        }

        function drawHzTicks(canvas) {
            const [g, , h] = prepare(canvas);
            g.fillStyle = '#d6d6d6';
            for (let k = 5; k <= 40; k += 5) g.fillRect(0, Math.round(h - k / 48 * h), k === 10 ? 4 : 2, 1);
            g.fillRect(0, h - 4, 4, 1);
        }

        document.getElementById('waves').innerHTML = [1, 2].map(n => `
            <div class="flex min-h-0 flex-1 ${n === 2 ? 'border-t border-[#8a8a8a]' : ''}">
                <canvas data-wave="${n}" class="block h-full min-w-0 flex-1"></canvas>
                <div class="flex w-[74px] shrink-0 items-center border-l border-[#262626] bg-[#4d4d4d]">
                    <canvas data-db class="block h-full w-1"></canvas>
                    <div data-db-labels class="ml-1 flex h-full w-8 flex-col"></div>
                    <button class="ml-auto mr-[2px] h-[18px] w-[22px] bg-[#262626] leading-[18px] text-[#35b4f7]">${n}</button>
                </div>
            </div>`).join('');

        document.getElementById('spectra').innerHTML = [1, 2].map(n => `
            <div class="flex min-h-0 flex-1 ${n === 2 ? 'border-t border-[#8a8a8a]' : ''}">
                <canvas data-spectrum="${n}" class="block h-full min-w-0 flex-1"></canvas>
                <div class="flex w-[74px] shrink-0 border-l border-[#262626] bg-[#4d4d4d]">
                    <canvas data-hz class="block h-full w-1"></canvas>
                    <div data-hz-labels class="ml-1 flex h-full w-8 flex-col text-[#909090]"></div>
                </div>
            </div>`).join('');

        const dbMarks = [[.08, 'dB']];
        for (const db of [3, 6, 12, 18]) dbMarks.push([1 - Math.pow(10, -db / 20), '-' + db]);
        dbMarks.push([1, '-∞']);
        for (const db of [18, 12, 6, 3]) dbMarks.push([1 + Math.pow(10, -db / 20), '-' + db]);
        document.querySelectorAll('[data-db-labels]').forEach(el => axis(el, dbMarks, 2, true));

        const hzMarks = [[2, 'Hz', 'text-[#d6d6d6]']];
        for (let k = 40; k >= 5; k -= 5) hzMarks.push([48 - k, k + 'k', k === 10 ? 'text-[#e6e6e6]' : '']);
        document.querySelectorAll('[data-hz-labels]').forEach(el => axis(el, hzMarks, 48, true));

        const timeMarks = [[3, 'чмс']];
        for (let t = 10; t <= 380; t += 10) timeMarks.push([t, Math.floor(t / 60) + ':' + String(t % 60).padStart(2, '0')]);
        axis(document.getElementById('timeline'), timeMarks, LENGTH, false);

        const meterMarks = [[.1, 'dB']];
        for (let d = 1; d <= 48; d++) meterMarks.push([d, d - 48]);
        axis(document.getElementById('meter-db'), meterMarks, 48, false);

        // The analysis grid runs from 40 dB, 11px down, to -300 dB, 4px above the bottom
        const freqDb = [[4, 'дБ']];
        for (let d = 20; d >= -300; d -= 20) freqDb.push([11 + (40 - d) / 340 * 249, d]);
        axis(document.getElementById('freq-db'), freqDb, 264, true);

        const freqX = [[0, 'Гц']];
        for (let k = 5; k <= 45; k += 5) freqX.push([k, k + 'k']);
        axis(document.getElementById('freq-x'), freqX, 48, false);

        document.getElementById('playhead').style.left = CURSOR / LENGTH * 100 + '%';

        // dB at kHz
        const curve = [[0, -35], [.7, -48], [1.5, -45], [3, -55], [4.5, -66], [6, -70], [8, -66], [10, -68], [13, -71], [16, -77],
            [19, -88], [22, -97], [25, -103], [29, -108], [33, -112], [37, -117], [42, -118], [46, -118], [48, -115]];
        const spikes = { .25: -33, .85: -35, 1.55: -21, 2.2: -28, 2.9: -45, 3.6: -50, 4.4: -56, 5: -55, 5.7: -62, 6.4: -60, 10.2: -61, 12.8: -65, 23.9: -92, 29.6: -103, 32.3: -100, 36.5: -109, 40.3: -97, 41.4: -110, 42.2: -110, 42.6: -109, 43.5: -111, 47.7: -102 };
        function drawFrequency() {
            const [g, w, h] = prepare(document.getElementById('freq'));
            const x0 = 4, sx = (w - 8) / 48, y0 = 11, sy = (h - 15) / 340;
            g.fillStyle = '#000';
            g.fillRect(0, 0, w, h);
            g.fillStyle = '#063806';
            for (let k = 0; k <= 45; k += 5) g.fillRect(Math.round(x0 + k * sx), 0, 1, h);
            for (let d = 40; d >= -300; d -= 20) g.fillRect(0, Math.round(y0 + (40 - d) * sy), w, 1);
            const rnd = random(9), pts = [];
            for (let x = x0; x < w - 4; x++) {
                const k = (x - x0) / sx;
                const i = Math.max(1, curve.findIndex(c => c[0] >= k));
                const a = curve[i - 1], b = curve[i];
                let d = a[1] + (b[1] - a[1]) * (k - a[0]) / (b[0] - a[0]) + (rnd() - .5) * (k < 13 ? 9 : 5);
                for (const s in spikes) if (Math.abs(k - s) < .07) d = spikes[s];
                pts.push(y0 + (40 - d) * sy);
            }
            g.fillStyle = '#7ba5c9';
            pts.forEach((y, i) => g.fillRect(x0 + i, Math.round(y), 1, h - 4 - Math.round(y)));
            for (const [color, shift] of [['#4585ee', -1], ['#7fdcff', 0]]) {
                g.strokeStyle = color;
                g.beginPath();
                pts.forEach((y, i) => g.lineTo(x0 + i + .5, Math.round(y) + shift + .5));
                g.stroke();
            }

            const [v, , vh] = prepare(document.getElementById('freq-ticks'));
            v.fillStyle = '#d6d6d6';
            v.fillRect(0, 0, 1, vh);
            for (let d = 50; d >= -300; d -= 10) v.fillRect(0, Math.round(y0 + (40 - d) * sy), d % 20 ? 5 : 8, 1);
            const [b] = prepare(document.getElementById('freq-xticks'));
            b.fillStyle = '#d6d6d6';
            b.fillRect(0, 0, w, 1);
            for (let k = 0; k <= 48; k++) b.fillRect(Math.round(x0 + k * sx), 0, 1, k % 5 ? 5 : 8);
        }

        function drawMeter() {
            const [g, w, h] = prepare(document.getElementById('meter'));
            g.fillStyle = '#404040';
            g.fillRect(0, 0, w, h);
            g.fillStyle = '#1a1a1a';
            for (let x = 2; x < w - 10; x += 4) g.fillRect(x, 1, 3, h - 2);
            g.fillRect(w - 9, 1, 8, 10);
            g.fillRect(w - 9, 12, 8, 10);
            g.fillStyle = '#ffff00';
            g.fillRect(2, 1, 3, 10);
            g.fillRect(2, 12, 3, 10);
            const [t, tw] = prepare(document.getElementById('meter-ticks'));
            t.fillStyle = '#d6d6d6';
            for (let i = 0; i <= 288; i++) t.fillRect(Math.round(i / 288 * (tw - 1)), 0, 1, i % 6 ? 2 : 4);
        }

        function drawTimeTicks() {
            const [g, w, h] = prepare(document.getElementById('time-ticks'));
            g.fillStyle = '#35b4f7';
            g.fillRect(Math.round(90.3 / LENGTH * w), 0, 1, h);
            g.fillStyle = '#d6d6d6';
            for (let t = 0; t < LENGTH; t += 5) g.fillRect(Math.round(t / LENGTH * w), t % 10 ? 3 : 0, 1, h);
            g.fillStyle = '#262626';
            g.fillRect(0, h - 1, w, 1);
        }

        function draw() {
            document.querySelectorAll('[data-wave]').forEach(c => drawWave(c, +c.dataset.wave));
            document.querySelectorAll('[data-spectrum]').forEach(c => drawSpectrum(c, +c.dataset.spectrum));
            document.querySelectorAll('[data-db]').forEach(drawDbTicks);
            document.querySelectorAll('[data-hz]').forEach(drawHzTicks);
            drawOverview();
            drawTimeTicks();
            drawFrequency();
            drawMeter();
        }

        // Redraw whenever a canvas gets a new size, also when the styles arrive late
        const observer = new ResizeObserver(draw);
        document.querySelectorAll('canvas').forEach(c => observer.observe(c));
        window.addEventListener('load', draw);
    </script>
</body>
</html>
